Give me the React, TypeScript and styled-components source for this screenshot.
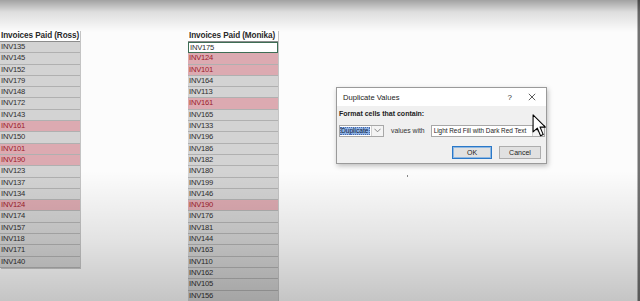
import styled, { createGlobalStyle } from 'styled-components'

const ross = [
  ['INV135', false], ['INV145', false], ['INV152', false], ['INV179', false],
  ['INV148', false], ['INV172', false], ['INV143', false], ['INV161', true],
  ['INV150', false], ['INV101', true], ['INV190', true], ['INV123', false],
  ['INV137', false], ['INV134', false], ['INV124', true], ['INV174', false],
  ['INV157', false], ['INV118', false], ['INV171', false], ['INV140', false],
] as const

const monika = [
  ['INV124', true], ['INV101', true], ['INV164', false], ['INV113', false],
  ['INV161', true], ['INV165', false], ['INV133', false], ['INV196', false],
  ['INV186', false], ['INV182', false], ['INV180', false], ['INV199', false],
  ['INV146', false], ['INV190', true], ['INV176', false], ['INV181', false],
  ['INV144', false], ['INV163', false], ['INV110', false], ['INV162', false],
  ['INV105', false], ['INV156', false],
] as const

export default function App() {
  return (
    <>
      <GlobalStyle />
      <Page>
        <Sheet $width={80}>
          <HeaderCell>Invoices Paid (Ross)</HeaderCell>
          {ross.map(([id, dup]) => (
            <Cell key={id} $dup={dup}>{id}</Cell>
          ))}
        </Sheet>

        <Sheet $width={90} $offset={108}>
          <HeaderCell>Invoices Paid (Monika)</HeaderCell>
          <ActiveCell>INV175</ActiveCell>
          {monika.map(([id, dup]) => (
            <Cell key={id} $dup={dup}>{id}</Cell>
          ))}
        </Sheet>

        <Dialog>
          <TitleBar>
            <Title>Duplicate Values</Title>
            <TitleButtons>
              <span>?</span>
              <CloseIcon viewBox="0 0 10 10">
                <path d="M1 1 L9 9 M9 1 L1 9" stroke="#333" strokeWidth="1" />
              </CloseIcon>
            </TitleButtons>
          </TitleBar>
          <DialogBody>
            <Label>Format cells that contain:</Label>
            <RuleRow>
              <Combo $width={45}>
                <Selected>Duplicate</Selected>
                <ComboArrow>
                  <svg viewBox="0 0 8 5" width="7" height="5">
                    <path d="M0.5 0.5 L4 4 L7.5 0.5" fill="none" stroke="#777" strokeWidth="1" />
                  </svg>
                </ComboArrow>
              </Combo>
              <Plain>values with</Plain>
              <Combo $width={114}>
                <FormatText>Light Red Fill with Dark Red Text</FormatText>
                <ComboArrow>
                  <svg viewBox="0 0 8 5" width="7" height="5">
                    <path d="M0.5 0.5 L4 4 L7.5 0.5" fill="none" stroke="#777" strokeWidth="1" />
                  </svg>
                </ComboArrow>
              </Combo>
            </RuleRow>
            <ButtonRow>
              <DialogButton $primary>OK</DialogButton>
              <DialogButton>Cancel</DialogButton>
            </ButtonRow>
          </DialogBody>
          <Cursor viewBox="0 0 14 22" width="15" height="25">
            <path
              d="M1 1 L1 17 L5 13.5 L8 20.5 L10.5 19.5 L7.5 12.5 L12.5 12.5 Z"
              fill="#fff"
              stroke="#000"
              strokeWidth="1"
              strokeLinejoin="round"
            />
          </Cursor>
        </Dialog>

        <Speck />
        <Vignette />
      </Page>
    </>
  )
}

const GlobalStyle = createGlobalStyle`
  body {
    margin: 0;
    background: #fff;
    font-family: "Liberation Sans", Arial, sans-serif;
  }
`

const Page = styled.div`
  position: relative;
  width: 640px;
  height: 301px;
  overflow: hidden;
  background: #fcfcfc;
  display: flex;
  align-items: flex-start;
  padding-top: 30px;
  box-sizing: border-box;
`

const Sheet = styled.div<{ $width: number; $offset?: number }>`
  width: ${({ $width }) => $width}px;
  margin-left: ${({ $offset }) => $offset ?? 0}px;
  display: flex;
  flex-direction: column;
  flex-shrink: 0;
  box-shadow: 1px 1px 0 #c4c4c4;
`

const HeaderCell = styled.div`
  height: 11px;
  line-height: 11px;
  font-size: 8.2px;
  font-weight: 700;
  color: #2a2a2a;
  background: #fff;
  border-bottom: 1px solid #8c8c8c;
  padding-left: 1px;
  white-space: nowrap;
  overflow: hidden;
  letter-spacing: -0.1px;
`

const Cell = styled.div<{ $dup?: boolean }>`
  height: 10.3px;
  line-height: 10.3px;
  font-size: 7.6px;
  padding-left: 1px;
  color: ${({ $dup }) => ($dup ? '#9c1a2a' : '#2e2e2e')};
  background: ${({ $dup }) => ($dup ? '#dcaab1' : '#d3d3d3')};
  border-bottom: 1px solid #b0b0b0;
  letter-spacing: -0.2px;
`

const ActiveCell = styled.div`
  height: 9.3px;
  line-height: 9.3px;
  font-size: 7.6px;
  padding-left: 1px;
  color: #2e2e2e;
  background: #fff;
  border: 1px solid #3e6e55;
  letter-spacing: -0.2px;
`

const Dialog = styled.div`
  position: relative;
  width: 209px;
  height: 75px;
  margin-left: 58px;
  margin-top: 57px;
  flex-shrink: 0;
  border: 1px solid #9a9a9a;
  box-shadow: 1px 2px 5px rgba(0, 0, 0, 0.25);
  background: #f0f0f0;
  display: flex;
  flex-direction: column;
  font-family: "Liberation Sans", Arial, sans-serif;
`

const TitleBar = styled.div`
  height: 18px;
  background: #fff;
  display: flex;
  align-items: center;
  justify-content: space-between;
  padding: 0 10px 0 6px;
`

const Title = styled.span`
  font-size: 7.6px;
  color: #222;
`

const TitleButtons = styled.div`
  display: flex;
  align-items: center;
  gap: 16px;
  font-size: 8px;
  color: #333;
`

const CloseIcon = styled.svg`
  width: 8px;
  height: 8px;
`

const DialogBody = styled.div`
  flex: 1;
  display: flex;
  flex-direction: column;
  padding: 3px 4px 0 2px;
`

const Label = styled.div`
  font-size: 7px;
  font-weight: 700;
  color: #222;
  height: 10px;
  line-height: 10px;
`

const RuleRow = styled.div`
  display: flex;
  align-items: center;
  margin-top: 5px;
  height: 13px;
`

const Combo = styled.div<{ $width: number }>`
  width: ${({ $width }) => $width}px;
  height: 12px;
  display: flex;
  align-items: stretch;
  flex-shrink: 0;
  background: #fff;
  border: 1px solid #a8a8a8;
  box-sizing: border-box;
`

const Selected = styled.span`
  flex: 1;
  margin: 1px 1px 1px 0;
  background: #8fb3e6;
  color: #0c1a3c;
  font-size: 6.6px;
  line-height: 8px;
  padding-left: 1px;
  white-space: nowrap;
  overflow: hidden;
  outline: 1px dotted #4a6aa8;
  outline-offset: -1px;
`

const ComboArrow = styled.span`
  width: 11px;
  flex-shrink: 0;
  display: flex;
  align-items: center;
  justify-content: center;
  border-left: 1px solid #d0d0d0;
  background: #f4f4f4;
`

const Plain = styled.span`
  font-size: 6.8px;
  color: #333;
  margin: 0 6px 0 7px;
  white-space: nowrap;
`

const FormatText = styled.span`
  flex: 1;
  font-size: 6.4px;
  line-height: 10px;
  padding-left: 2px;
  color: #222;
  white-space: nowrap;
  overflow: hidden;
`

const ButtonRow = styled.div`
  display: flex;
  justify-content: flex-end;
  gap: 7px;
  margin-top: 9px;
  padding-right: 1px;
`

const DialogButton = styled.button<{ $primary?: boolean }>`
  width: ${({ $primary }) => ($primary ? 40 : 42)}px;
  height: 13px;
  padding: 0;
  font-family: inherit;
  font-size: 7px;
  color: #222;
  background: #e1e1e1;
  border: 1px solid ${({ $primary }) => ($primary ? '#2a78c8' : '#adadad')};
  box-shadow: ${({ $primary }) => ($primary ? 'inset 0 0 0 1px #8fb8e2' : 'none')};
`

const Cursor = styled.svg`
  position: absolute;
  left: 195px;
  top: 25px;
`

const Speck = styled.span`
  position: absolute;
  left: 407px;
  top: 175px;
  width: 1px;
  height: 2px;
  background: #888;
`

const Vignette = styled.div`
  position: absolute;
  inset: 0;
  pointer-events: none;
  background:
    linear-gradient(to bottom, rgba(0, 0, 0, 0.36) 0px, rgba(0, 0, 0, 0.12) 12px, rgba(0, 0, 0, 0) 32px),
    linear-gradient(to left, rgba(0, 0, 0, 0.55) 0px, rgba(0, 0, 0, 0.55) 2px, rgba(0, 0, 0, 0) 3px),
    linear-gradient(to top, rgba(0, 0, 0, 0.22) 0px, rgba(0, 0, 0, 0.1) 60px, rgba(0, 0, 0, 0) 130px);
`
